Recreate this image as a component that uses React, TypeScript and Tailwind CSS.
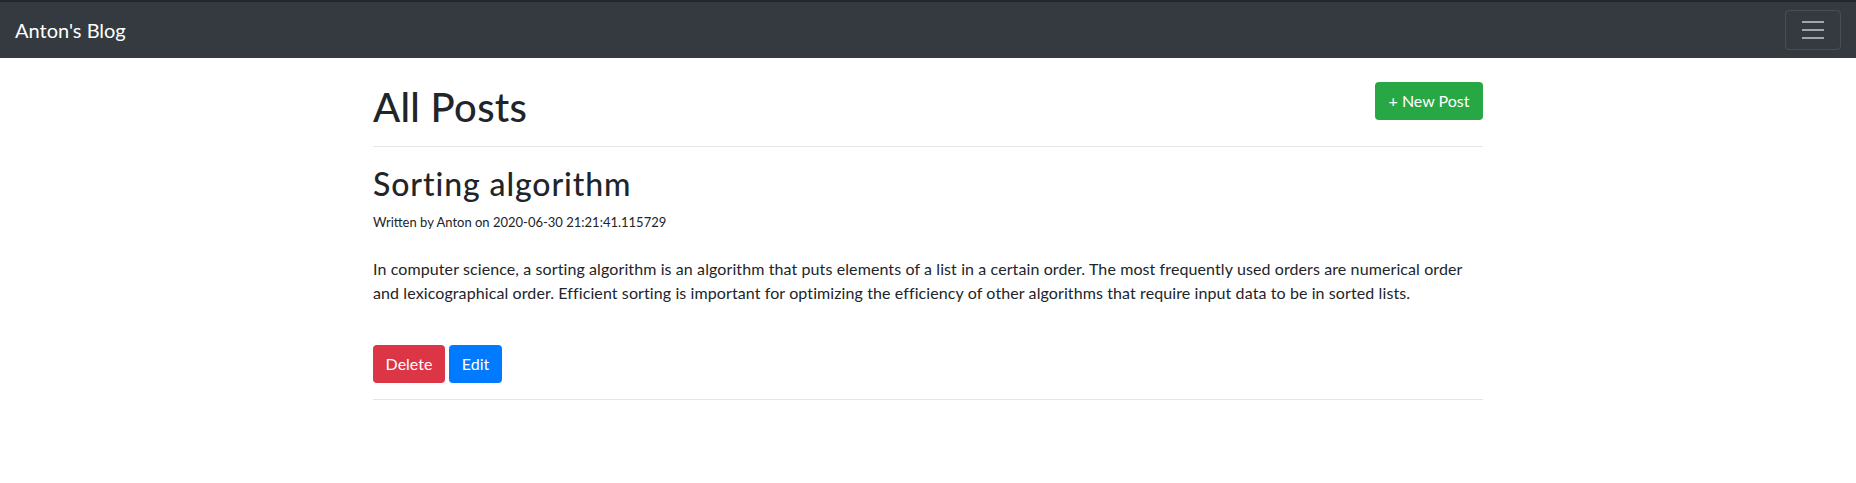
export default function App() {
  return (
    <div className="min-h-[483px] bg-white text-[#212529] font-['Lato',sans-serif]">
      <div className="h-[2px] bg-[#24282c]" />
      <nav className="flex h-[56px] items-center justify-between bg-[#343a40] pl-[15px] pr-[15px]">
        <a className="text-[20px] leading-[30px] text-white">Anton's Blog</a>
        <button className="flex h-[40px] w-[56px] items-center justify-center rounded-[4px] border border-white/10">
          <svg width="30" height="30" viewBox="0 0 30 30">
            <path d="M4 7h22M4 15h22M4 23h22" stroke="rgba(255,255,255,0.55)" strokeWidth="2" strokeLinecap="butt" />
          </svg>
        </button>
      </nav>
      <main className="mx-auto w-[1110px]">
        <div className="mt-[24px] flex items-start justify-between">
          <h1 className="mt-[1px] text-[40px] font-medium leading-[48px] tracking-[0.3px]">All Posts</h1>
          <button className="flex h-[38px] w-[108px] items-center justify-center rounded-[4px] bg-[#28a745] text-[16px] text-white">
            + New Post
          </button>
        </div>
        <hr className="mt-[15px] border-t border-black/10" />
        <article>
          <h2 className="mt-[18px] text-[32px] font-medium leading-[38px] tracking-[0.9px]">Sorting algorithm</h2>
          <p className="mt-[10px] text-[13px] leading-[19px]">Written by Anton on 2020-06-30 21:21:41.115729</p>
          <p className="mt-[25px] text-[16px] leading-[24px] tracking-[0.1px]">
            In computer science, a sorting algorithm is an algorithm that puts elements of a list in a certain order. The most frequently used orders are numerical order and lexicographical order. Efficient sorting is important for optimizing the efficiency of other algorithms that require input data to be in sorted lists.
          </p>
          <div className="mt-[40px] flex gap-[4px]">
            <button className="flex h-[38px] w-[72px] items-center justify-center rounded-[4px] bg-[#dc3545] text-[16px] text-white">Delete</button>
            <button className="flex h-[38px] w-[53px] items-center justify-center rounded-[4px] bg-[#007bff] text-[16px] text-white">Edit</button>
          </div>
          <hr className="mt-[16px] border-t border-black/10" />
        </article>
      </main>
    </div>
  );
}
